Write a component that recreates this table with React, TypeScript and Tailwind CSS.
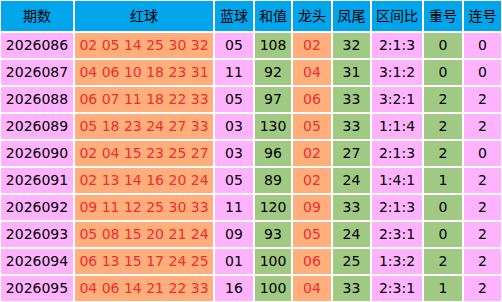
const HEADERS = ['期数', '红球', '蓝球', '和值', '龙头', '凤尾', '区间比', '重号', '连号'];

// column fill, per column index
const FILLS = [
  'bg-[#ffb3ff]',
  'bg-[#ffae7c] text-[#ee2d2d]',
  'bg-[#ffb3ff]',
  'bg-[#a0c983]',
  'bg-[#ffae7c] text-[#ee2d2d]',
  'bg-[#a0c983]',
  'bg-[#ffb3ff]',
  'bg-[#a0c983]',
  'bg-[#ffb3ff]',
];

const ROWS: string[][] = [
  ['2026086', '02 05 14 25 30 32', '05', '108', '02', '32', '2:1:3', '0', '0'],
  ['2026087', '04 06 10 18 23 31', '11', '92', '04', '31', '3:1:2', '0', '0'],
  ['2026088', '06 07 11 18 22 33', '05', '97', '06', '33', '3:2:1', '2', '2'],
  ['2026089', '05 18 23 24 27 33', '03', '130', '05', '33', '1:1:4', '2', '2'],
  ['2026090', '02 04 15 23 25 27', '03', '96', '02', '27', '2:1:3', '2', '0'],
  ['2026091', '02 13 14 16 20 24', '05', '89', '02', '24', '1:4:1', '1', '2'],
  ['2026092', '09 11 12 25 30 33', '11', '120', '09', '33', '2:1:3', '0', '2'],
  ['2026093', '05 08 15 20 21 24', '09', '93', '05', '24', '2:3:1', '0', '2'],
  ['2026094', '06 13 15 17 24 25', '01', '100', '06', '25', '1:3:2', '2', '2'],
  ['2026095', '04 06 14 21 22 33', '16', '100', '04', '33', '2:3:1', '1', '2'],
];

export default function App() {
  return (
    <div
      className="h-[302px] w-[502px] bg-white text-[14px] text-black"
      style={{ fontFamily: '"DejaVu Sans", "Noto Sans CJK SC", sans-serif' }}
    >
      <div className="grid grid-cols-[72px_138px_38px_36px_38px_37px_50px_38px_37px] gap-[2px] bg-white p-px">
        {HEADERS.map((h) => (
          <div key={h} className="flex h-[30px] items-center justify-center bg-[#00a5ec] whitespace-nowrap">
            {h}
          </div>
        ))}
        {ROWS.map((row) =>
          row.map((cell, i) => (
            <div
              key={`${row[0]}-${i}`}
              className={`flex h-[25px] items-center justify-center whitespace-pre ${FILLS[i]}`}
            >
              {cell}
            </div>
          )),
        )}
      </div>
    </div>
  );
}
